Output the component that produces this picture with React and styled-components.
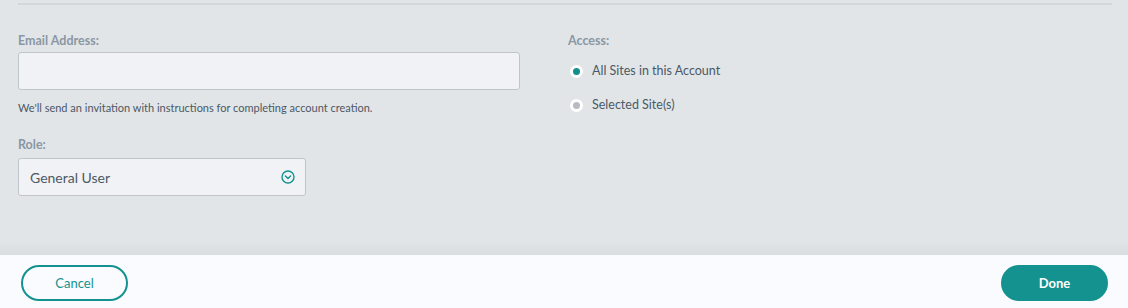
import React from "react";
import styled, { createGlobalStyle } from "styled-components";

const Global = createGlobalStyle`
  html, body { margin: 0; padding: 0; }
  body { font-family: Lato, "Open Sans", sans-serif; background: #e1e5e8; }
  * { box-sizing: border-box; }
`;

const Page = styled.div`
  width: 1128px;
  height: 308px;
  display: flex;
  flex-direction: column;
  background: #e1e5e8;
`;

const Main = styled.div`
  flex: 1;
  padding: 3px 16px 0 18px;
  background: linear-gradient(to bottom, #e1e5e8 0, #e1e5e8 calc(100% - 14px), #d9dde0 100%);
`;

const Content = styled.div`
  border-top: 2px solid #d3d7db;
  padding-top: 28px;
  display: grid;
  grid-template-columns: 502px 1fr;
  column-gap: 48px;
`;

const Column = styled.div`
  display: flex;
  flex-direction: column;
`;

const Label = styled.div`
  font-size: 12.5px;
  line-height: 16px;
  font-weight: 700;
  color: #8a97a3;
  margin-bottom: ${(p) => p.$gap || 3}px;
`;

const Input = styled.input`
  width: ${(p) => p.$w}px;
  height: 38px;
  border: 1px solid #bfc5cb;
  border-radius: 3px;
  background: #f0f2f5;
  outline: none;
  padding: 0 11px;
  font-family: inherit;
  font-size: 14px;
`;

const Help = styled.div`
  margin-top: 11px;
  font-size: 11px;
  line-height: 14px;
  color: #4d5863;
`;

const RoleGroup = styled.div`
  margin-top: 22px;
  display: flex;
  flex-direction: column;
`;

const Select = styled.div`
  width: 288px;
  height: 38px;
  border: 1px solid #bfc5cb;
  border-radius: 3px;
  background: #f0f2f5;
  display: flex;
  align-items: center;
  justify-content: space-between;
  padding: 0 10px 0 11px;
  font-size: 14px;
  color: #4b5965;
`;

const RadioList = styled.div`
  display: flex;
  flex-direction: column;
  gap: 20px;
  margin-top: 12px;
`;

const RadioRow = styled.label`
  display: flex;
  align-items: center;
  gap: 9px;
  margin-left: 2px;
  font-size: 12.5px;
  line-height: 14px;
  color: #4b5965;
`;

const RadioOuter = styled.span`
  width: 13px;
  height: 13px;
  border-radius: 50%;
  background: #ffffff;
  display: flex;
  align-items: center;
  justify-content: center;
`;

const RadioDot = styled.span`
  width: 7px;
  height: 7px;
  border-radius: 50%;
  background: ${(p) => (p.$on ? "#13908d" : "#b7bcc2")};
`;

const Footer = styled.div`
  height: 53px;
  background: #f9fbfe;
  display: flex;
  align-items: flex-start;
  justify-content: space-between;
  padding: 10px 20px 0 21px;
`;

const Button = styled.button`
  width: 107px;
  height: 36px;
  border-radius: 18px;
  font-family: inherit;
  font-size: 13px;
  cursor: pointer;
  border: 2px solid #13928f;
  background: ${(p) => (p.$primary ? "#13928f" : "transparent")};
  color: ${(p) => (p.$primary ? "#ffffff" : "#13928f")};
  font-weight: ${(p) => (p.$primary ? 700 : 400)};
`;

const ChevronCircle = () => (
  <svg width="14" height="14" viewBox="0 0 14 14" fill="none">
    <circle cx="7" cy="7" r="6" stroke="#13928f" strokeWidth="1.4" />
    <path d="M4.4 6 L7 8.5 L9.6 6" stroke="#13928f" strokeWidth="1.4" strokeLinecap="round" strokeLinejoin="round" />
  </svg>
);

export default function App() {
  return (
    <Page>
      <Global />
      <Main>
        <Content>
          <Column>
            <Label>Email Address:</Label>
            <Input $w={502} type="text" />
            <Help>We'll send an invitation with instructions for completing account creation.</Help>
            <RoleGroup>
              <Label $gap={5}>Role:</Label>
              <Select>
                <span>General User</span>
                <ChevronCircle />
              </Select>
            </RoleGroup>
          </Column>
          <Column>
            <Label>Access:</Label>
            <RadioList>
              <RadioRow>
                <RadioOuter><RadioDot $on /></RadioOuter>
                All Sites in this Account
              </RadioRow>
              <RadioRow>
                <RadioOuter><RadioDot /></RadioOuter>
                Selected Site(s)
              </RadioRow>
            </RadioList>
          </Column>
        </Content>
      </Main>
      <Footer>
        <Button>Cancel</Button>
        <Button $primary>Done</Button>
      </Footer>
    </Page>
  );
}
